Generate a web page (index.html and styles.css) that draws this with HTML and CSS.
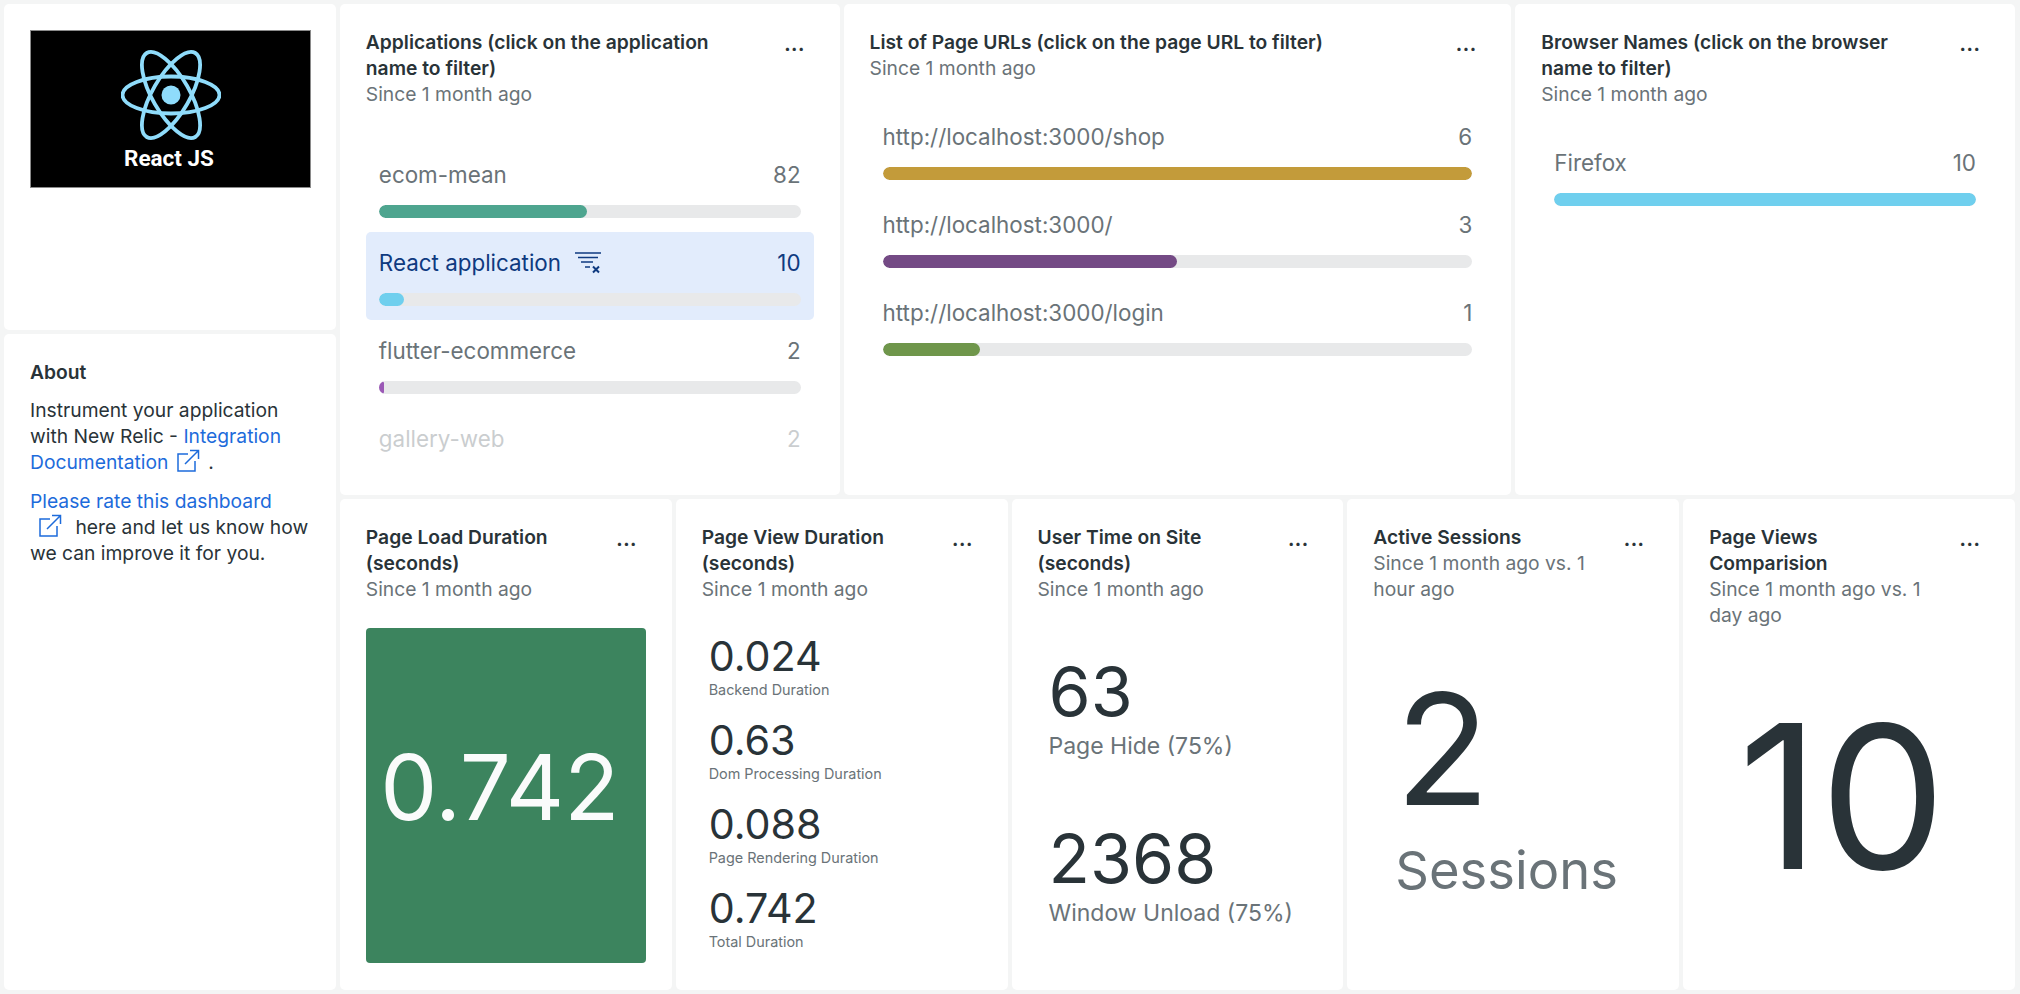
FILE: index.html
```html
<!DOCTYPE html>
<html lang="en">
<head>
<meta charset="utf-8">
<title>React JS Dashboard</title>
<link rel="stylesheet" href="styles.css">
</head>
<body>
<main class="grid">
  <section class="card logo-card">
    <div class="logo">
      <svg class="atom" viewBox="0 0 100 90" aria-hidden="true">
        <g fill="none" stroke="#8fdcfb" stroke-width="3.800">
          <ellipse cx="50" cy="45" rx="48.500" ry="18.500"/>
          <ellipse cx="50" cy="45" rx="48.500" ry="18.500" transform="rotate(60 50 45)"/>
          <ellipse cx="50" cy="45" rx="48.500" ry="18.500" transform="rotate(120 50 45)"/>
        </g>
        <circle cx="50" cy="45" r="9.500" fill="#8fdcfb"/>
      </svg>
      <span class="logo-text">React JS</span>
    </div>
  </section>

  <section class="card about">
    <h2>About</h2>
    <p>Instrument your application with New Relic - <a href="#">Integration Documentation<svg class="ext" viewBox="0 0 24 24" aria-hidden="true"><path d="M12 5H2v17h17V12M9 15 22.500 1.500M14 1.500h8.500V10"/></svg></a>.</p>
    <p><a href="#">Please rate this dashboard <svg class="ext" viewBox="0 0 24 24" aria-hidden="true"><path d="M12 5H2v17h17V12M9 15 22.500 1.500M14 1.500h8.500V10"/></svg></a> here and let us know how we can improve it for you.</p>
  </section>

  <section class="card apps">
    <header class="head">
      <div class="titles"><h3>Applications (click on the application name to filter)</h3><p>Since 1 month ago</p></div>
      <span class="more">...</span>
    </header>
    <div class="bars">
      <div class="bar-row"><div class="bar-label"><span>ecom-mean</span><span>82</span></div><div class="track"><div class="fill c-teal" style="width:49.300%"></div></div></div>
      <div class="bar-row active"><div class="bar-label"><span class="name">React application<svg class="clear" viewBox="0 0 26 22" aria-hidden="true"><path d="M0 1h26M3 5.500h20M6 10h12M10 15h5"/><path class="x" d="M18 14.500l6 6M24 14.500l-6 6"/></svg></span><span>10</span></div><div class="track"><div class="fill c-sky" style="width:5.900%"></div></div></div>
      <div class="bar-row"><div class="bar-label"><span>flutter-ecommerce</span><span>2</span></div><div class="track"><div class="fill c-purple" style="width:1.200%"></div></div></div>
      <div class="bar-row faded"><div class="bar-label"><span>gallery-web</span><span>2</span></div></div>
    </div>
  </section>

  <section class="card urls">
    <header class="head">
      <div class="titles"><h3>List of Page URLs (click on the page URL to filter)</h3><p>Since 1 month ago</p></div>
      <span class="more">...</span>
    </header>
    <div class="bars">
      <div class="bar-row"><div class="bar-label"><span>http://localhost:3000/shop</span><span>6</span></div><div class="track"><div class="fill c-gold" style="width:100%"></div></div></div>
      <div class="bar-row"><div class="bar-label"><span>http://localhost:3000/</span><span>3</span></div><div class="track"><div class="fill c-violet" style="width:50%"></div></div></div>
      <div class="bar-row"><div class="bar-label"><span>http://localhost:3000/login</span><span>1</span></div><div class="track"><div class="fill c-green" style="width:16.600%"></div></div></div>
    </div>
  </section>

  <section class="card browsers">
    <header class="head">
      <div class="titles"><h3>Browser Names (click on the browser name to filter)</h3><p>Since 1 month ago</p></div>
      <span class="more">...</span>
    </header>
    <div class="bars">
      <div class="bar-row"><div class="bar-label"><span>Firefox</span><span>10</span></div><div class="track"><div class="fill c-sky" style="width:100%"></div></div></div>
    </div>
  </section>

  <section class="card small">
    <header class="head">
      <div class="titles"><h3>Page Load Duration (seconds)</h3><p>Since 1 month ago</p></div>
      <span class="more">...</span>
    </header>
    <div class="billboard">0.742</div>
  </section>

  <section class="card small">
    <header class="head">
      <div class="titles"><h3>Page View Duration (seconds)</h3><p>Since 1 month ago</p></div>
      <span class="more">...</span>
    </header>
    <div class="metrics">
      <div class="metric"><strong>0.024</strong><span>Backend Duration</span></div>
      <div class="metric"><strong>0.63</strong><span>Dom Processing Duration</span></div>
      <div class="metric"><strong>0.088</strong><span>Page Rendering Duration</span></div>
      <div class="metric"><strong>0.742</strong><span>Total Duration</span></div>
    </div>
  </section>

  <section class="card small">
    <header class="head">
      <div class="titles"><h3>User Time on Site (seconds)</h3><p>Since 1 month ago</p></div>
      <span class="more">...</span>
    </header>
    <div class="pair">
      <div class="pair-item"><strong>63</strong><span>Page Hide (75%)</span></div>
      <div class="pair-item"><strong>2368</strong><span>Window Unload (75%)</span></div>
    </div>
  </section>

  <section class="card small">
    <header class="head">
      <div class="titles"><h3>Active Sessions</h3><p>Since 1 month ago vs. 1 hour ago</p></div>
      <span class="more">...</span>
    </header>
    <div class="solo"><strong>2</strong><span>Sessions</span></div>
  </section>

  <section class="card small">
    <header class="head">
      <div class="titles"><h3>Page Views Comparision</h3><p>Since 1 month ago vs. 1 day ago</p></div>
      <span class="more">...</span>
    </header>
    <div class="huge">10</div>
  </section>
</main>
</body>
</html>
```

FILE: styles.css
```css
* { box-sizing: border-box; }
html, body { margin: 0; height: 100%; }
body {
  background: #f4f5f5;
  color: #293338;
  font-family: Inter, "Liberation Sans", sans-serif;
  font-size: 19.250px;
  line-height: 26px;
  overflow: hidden;
}
.grid {
  display: grid;
  grid-template-columns: repeat(12, 1fr);
  grid-template-rows: repeat(6, 161px);
  gap: 4px;
  padding: 4px 5px 4px 4px;
}
.card {
  background: #fff;
  border-radius: 5px;
  padding: 25px 26px 0;
  overflow: hidden;
  min-width: 0;
  grid-column: span 2;
  grid-row: span 3;
}
.logo-card { grid-row: span 2; padding-top: 26px; }
.about { grid-column: 1 / span 2; grid-row: 3 / span 4; }
.apps { grid-column: 3 / span 3; grid-row: 1 / span 3; }
.urls { grid-column: 6 / span 4; grid-row: 1 / span 3; }
.browsers { grid-column: 10 / span 3; grid-row: 1 / span 3; }

.logo {
  width: 281px;
  height: 158px;
  background: #000;
  border: 1px solid #8a8a8a;
  display: flex;
  flex-direction: column;
  align-items: center;
  padding-top: 19px;
}
.atom { width: 100px; height: 90px; display: block; }
.logo-text {
  color: #fff;
  font-family: Roboto, sans-serif;
  font-weight: 700;
  font-size: 22.500px;
  line-height: 28px;
  margin: 4px 0 0 -3px;
}

.about h2 { margin: 0 0 12px; font-size: inherit; line-height: 26px; font-weight: 600; }
.about p { margin: 0 0 13px; }
.about a { color: #1d6bdb; text-decoration: none; }
.ext {
  width: 24px;
  height: 24px;
  fill: none;
  stroke: #1d6bdb;
  stroke-width: 1.500;
  margin: 0 8px -4px 8px;
}

.head { display: flex; justify-content: space-between; align-items: flex-start; gap: 24px; }
.titles { min-width: 0; flex: 1; }
.head h3 { margin: 0; font-size: inherit; line-height: 26px; font-weight: 600; color: #293338; }
.head p { margin: 0; color: #6a7378; line-height: 26px; }
.more {
  flex: none;
  width: 38px;
  text-align: center;
  font-weight: 700;
  font-size: 19.250px;
  letter-spacing: .5px;
  line-height: 26px;
  color: #293338;
  margin-top: 2px;
}

.bars { margin-top: 25px; display: flex; flex-direction: column; }
.apps .bars { margin-top: 37px; }
.bar-row { padding: 14px 13px 14px; height: 88px; flex: none; border-radius: 5px; }
.bar-label { display: flex; justify-content: space-between; align-items: flex-start; color: #6a7378; font-size: 22.400px; line-height: 34px; height: 47px; }
.track { height: 13px; border-radius: 7px; background: #e8e9ea; overflow: hidden; }
.fill { height: 100%; border-radius: 7px; }
.active { background: #e2ecfc; }
.active .bar-label { color: #0f3a80; }
.name { display: flex; align-items: center; height: 34px; }
.clear { width: 26px; height: 22px; margin-left: 14px; fill: none; stroke: #0f3a80; stroke-width: 1.500; }
.clear .x { stroke-width: 2; }
.faded { opacity: .35; }
.c-teal { background: #4ea58f; }
.c-sky { background: #6fcfee; }
.c-purple { background: #9b59b6; }
.c-gold { background: #c39b3a; }
.c-violet { background: #744a85; }
.c-green { background: #6f964b; }

.billboard {
  margin-top: 26px;
  height: 335px;
  background: #3c845e;
  border-radius: 4px;
  color: #fafbfb;
  display: flex;
  align-items: center;
  justify-content: center;
  padding: 0 12px 16px 0;
  font-size: 90.500px;
  line-height: 1;
}
.metrics { margin: 29px 0 0 7px; display: flex; flex-direction: column; }
.metric { height: 84px; display: flex; flex-direction: column; }
.metric strong { font-weight: 400; font-size: 41.250px; line-height: 50px; color: #293338; }
.metric span { font-size: 14.400px; line-height: 18px; color: #6a7378; }

.pair { margin: 49px 0 0 11px; display: flex; flex-direction: column; }
.pair-item { height: 167px; display: flex; flex-direction: column; }
.pair-item strong { font-weight: 400; font-size: 68px; line-height: 80px; }
.pair-item span { font-size: 23px; line-height: 30px; color: #6a7378; }

.solo { margin: 62px 0 0 22px; display: flex; flex-direction: column; align-items: flex-start; }
.solo strong { font-weight: 400; font-size: 155px; line-height: 170px; }
.solo span { font-size: 52.500px; line-height: 72px; color: #6a7378; }

.huge { margin-top: 68px; padding-right: 14px; text-align: center; font-size: 200px; line-height: 200px; }
```
